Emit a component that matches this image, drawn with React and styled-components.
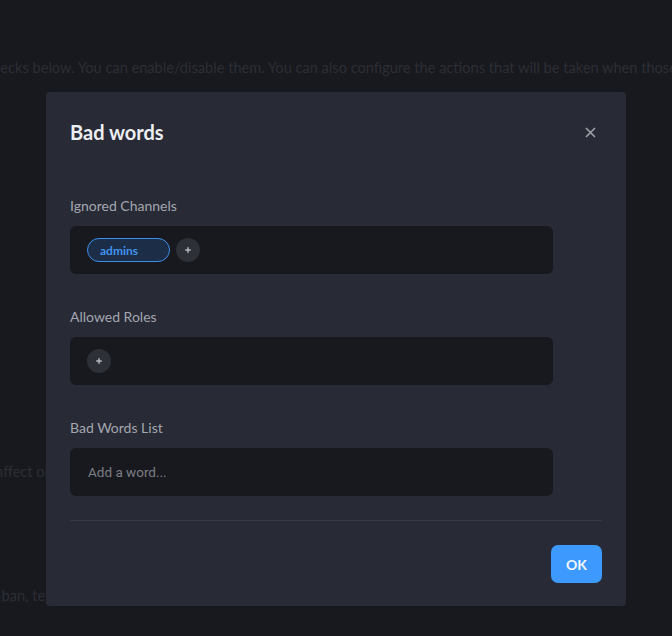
import React from "react";
import styled, { createGlobalStyle } from "styled-components";

const GlobalStyle = createGlobalStyle`
  html, body {
    margin: 0;
    padding: 0;
    background: #18191e;
    font-family: Lato, "Open Sans", sans-serif;
  }
  * { box-sizing: border-box; }
`;

const Page = styled.div`
  position: relative;
  width: 672px;
  height: 636px;
  overflow: hidden;
  background: #18191e;
`;

const BackText = styled.div`
  margin-left: -${(props) => props.shift || 0}px;
  padding-top: ${(props) => props.top || 0}px;
  white-space: nowrap;
  font-size: 14.6px;
  line-height: 18px;
  color: #2c2e35;
`;

const Modal = styled.div`
  position: absolute;
  left: 46px;
  top: 92px;
  width: 580px;
  height: 514px;
  background: #282a36;
  border-radius: 4px;
  padding: 24px 24px 23px 24px;
  display: flex;
  flex-direction: column;
`;

const Header = styled.div`
  display: flex;
  align-items: center;
  justify-content: space-between;
  height: 32px;
`;

const Title = styled.h2`
  margin: 0;
  font-size: 20px;
  font-weight: 700;
  color: #eceef2;
`;

const Close = styled.button`
  border: none;
  background: none;
  padding: 0;
  width: 14px;
  height: 14px;
  display: flex;
  align-items: center;
  justify-content: center;
  margin-right: 5px;
  cursor: pointer;
`;

const Body = styled.div`
  display: flex;
  flex-direction: column;
  padding-top: 48px;
  gap: 33px;
`;

const Field = styled.div`
  display: flex;
  flex-direction: column;
  gap: 10px;
`;

const Label = styled.div`
  font-size: 14px;
  line-height: 20px;
  color: #a3a6ae;
`;

const Box = styled.div`
  width: 483px;
  height: 48px;
  background: #18191e;
  border-radius: 6px;
  display: flex;
  align-items: center;
  gap: 6px;
  padding: 0 17px;
`;

const Chip = styled.span`
  width: 83px;
  height: 24px;
  border: 1px solid #3b8eea;
  background: #1c2d48;
  border-radius: 12px;
  color: #4293ee;
  font-size: 12px;
  font-weight: 700;
  padding-left: 12px;
  display: flex;
  align-items: center;
`;

const AddButton = styled.span`
  width: 24px;
  height: 24px;
  border-radius: 50%;
  background: #2e3038;
  display: flex;
  align-items: center;
  justify-content: center;
`;

const WordInput = styled.input`
  flex: 1;
  border: none;
  outline: none;
  background: transparent;
  font-family: Roboto, sans-serif;
  font-size: 13.5px;
  color: #d0d2d8;
  padding-left: 1px;
  &::placeholder {
    color: #7b7e86;
  }
`;

const Divider = styled.div`
  height: 1px;
  background: #363948;
  margin-top: 24px;
`;

const Footer = styled.div`
  display: flex;
  justify-content: flex-end;
  padding-top: 24px;
`;

const OkButton = styled.button`
  width: 51px;
  height: 38px;
  border: none;
  border-radius: 7px;
  background: #3d99fd;
  color: #f4f8ff;
  font-family: Lato, sans-serif;
  font-size: 14px;
  font-weight: 700;
  cursor: pointer;
`;

const Plus = () => (
  <svg width="8" height="8" viewBox="0 0 8 8">
    <path d="M4 1.2v5.6M1.2 4h5.6" stroke="#b4b6bc" strokeWidth="1.5" />
  </svg>
);

const CloseIcon = () => (
  <svg width="11" height="11" viewBox="0 0 11 11">
    <path d="M1 1l9 9M10 1l-9 9" stroke="#a0a2a8" strokeWidth="1.6" />
  </svg>
);

export default function App() {
  return (
    <Page>
      <GlobalStyle />
      <BackText shift={106} top={59}>
        Configure the checks below. You can enable/disable them. You can also configure the actions that will be taken when those checks are triggered.
      </BackText>
      <BackText shift={54} top={386}>
        Checks affect only members without bypass roles.
      </BackText>
      <BackText shift={33} top={106}>
        Kick, ban, temporarily mute or delete the message.
      </BackText>
      <Modal>
        <Header>
          <Title>Bad words</Title>
          <Close>
            <CloseIcon />
          </Close>
        </Header>
        <Body>
          <Field>
            <Label>Ignored Channels</Label>
            <Box>
              <Chip>admins</Chip>
              <AddButton>
                <Plus />
              </AddButton>
            </Box>
          </Field>
          <Field>
            <Label>Allowed Roles</Label>
            <Box>
              <AddButton>
                <Plus />
              </AddButton>
            </Box>
          </Field>
          <Field>
            <Label>Bad Words List</Label>
            <Box>
              <WordInput placeholder="Add a word..." />
            </Box>
          </Field>
        </Body>
        <Divider />
        <Footer>
          <OkButton>OK</OkButton>
        </Footer>
      </Modal>
    </Page>
  );
}
